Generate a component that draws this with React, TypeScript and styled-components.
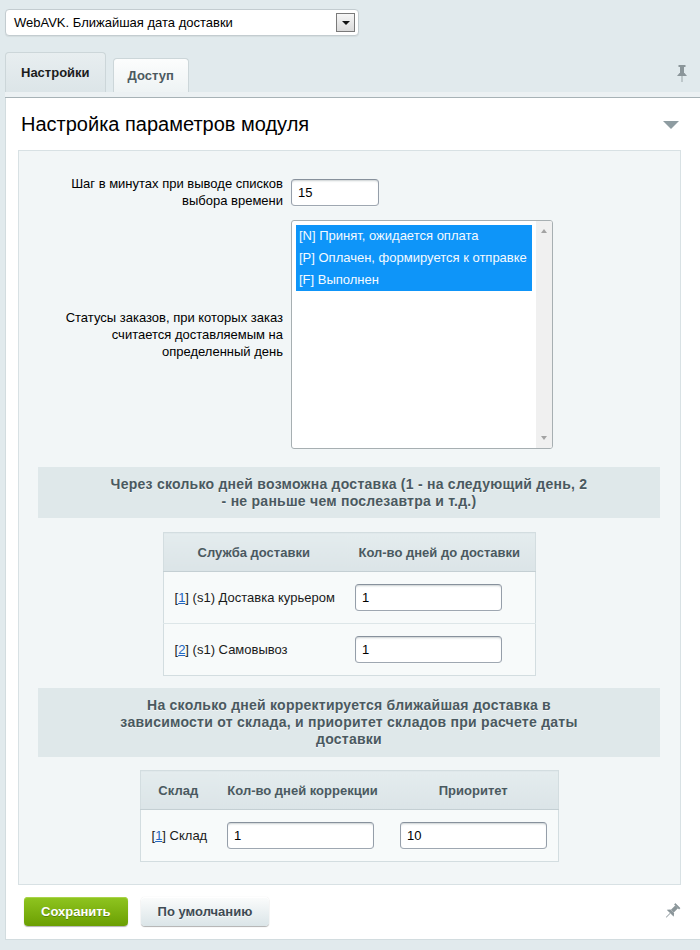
import React from "react";
import styled, { createGlobalStyle, css } from "styled-components";

const GlobalStyle = createGlobalStyle`
  html, body { margin: 0; padding: 0; }
  body {
    background: #e1eaed;
    font-family: "Liberation Sans", Arial, sans-serif;
    font-size: 13px;
    color: #000;
    overflow: hidden;
  }
  * { box-sizing: border-box; }
`;

const Page = styled.div`
  padding: 9px 0 0 5px;
  height: 950px;
`;

const ModuleSelect = styled.div`
  width: 354px;
  height: 27px;
  background: #fff;
  border: 1px solid #c3ccd0;
  border-radius: 4px;
  display: flex;
  align-items: center;
  justify-content: space-between;
  padding: 0 3px 0 8px;
  font-size: 13px;
  color: #000;
  box-shadow: 0 1px 1px rgba(0, 0, 0, 0.06);
`;

const DropButton = styled.span`
  width: 19px;
  height: 19px;
  border: 1px solid #7a7a7a;
  background: linear-gradient(#f6f6f6, #dadada);
  display: flex;
  align-items: center;
  justify-content: center;
  &::after {
    content: "";
    border-left: 4px solid transparent;
    border-right: 4px solid transparent;
    border-top: 4px solid #111;
    margin-top: 1px;
  }
`;

const TabBar = styled.div`
  margin-top: 16px;
  display: flex;
  align-items: flex-end;
  gap: 7px;
  height: 40px;
  padding-right: 13px;
`;

const Tab = styled.div<{ $active?: boolean }>`
  height: ${(p) => (p.$active ? 40 : 34)}px;
  padding: 0 ${(p) => (p.$active ? 15 : 14)}px;
  border: 1px solid #ccd6d9;
  border-bottom: none;
  border-radius: 4px 4px 0 0;
  display: flex;
  align-items: center;
  font-weight: bold;
  font-size: 13px;
  color: ${(p) => (p.$active ? "#1c1c1c" : "#4c5a60")};
  background: ${(p) =>
    p.$active
      ? "linear-gradient(#e8eef0, #dce5e8)"
      : "linear-gradient(#fcfdfd, #eef3f4)"};
`;

const PinSlot = styled.div`
  margin-left: auto;
  align-self: center;
  display: flex;
  margin-top: 2px;
`;

const TabStrip = styled.div`
  height: 6px;
  background: #ecf1f3;
  border-bottom: 1px solid #a7b2b6;
`;

const Panel = styled.div`
  background: #fff;
  border-left: 1px solid #d2dcdf;
  border-bottom: 1px solid #d2dcdf;
  padding: 0 19px 13px 12px;
`;

const TitleRow = styled.div`
  height: 52px;
  display: flex;
  align-items: center;
  justify-content: space-between;
  padding-left: 3px;
  padding-right: 2px;
`;

const Title = styled.h1`
  margin: 0;
  font-weight: normal;
  font-size: 20px;
  color: #000;
  line-height: 24px;
`;

const Collapse = styled.span`
  width: 0;
  height: 0;
  border-left: 8px solid transparent;
  border-right: 8px solid transparent;
  border-top: 8px solid #8e9ca1;
  margin-top: 1px;
`;

const Inner = styled.div`
  background: #f2f6f7;
  border: 1px solid #d8e1e4;
  padding: 24px 20px 22px 19px;
`;

const FieldRow = styled.div<{ $mt?: number }>`
  display: grid;
  grid-template-columns: 240px 1fr;
  column-gap: 8px;
  align-items: center;
  padding-left: 5px;
  margin-top: ${(p) => p.$mt ?? 0}px;
`;

const Label = styled.div`
  text-align: right;
  line-height: 17px;
  font-size: 13px;
  color: #000;
`;

const Control = styled.div`
  display: flex;
  align-items: center;
`;

const TextInput = styled.input<{ $w: number }>`
  display: block;
  width: ${(p) => p.$w}px;
  height: 27px;
  background: #fff;
  border: 1px solid;
  border-color: #87919c #959ea9 #9ea7b1 #959ea9;
  border-radius: 4px;
  box-shadow: 0 1px 0 0 rgba(255, 255, 255, 0.3),
    inset 0 2px 2px -1px rgba(180, 188, 191, 0.7);
  padding: 0 6px;
  font: 13px "Liberation Sans", Arial, sans-serif;
  color: #000;
  outline: none;
`;

const ListBox = styled.div`
  width: 262px;
  height: 229px;
  border: 1px solid #a7afb2;
  border-radius: 3px;
  background: #fff;
  display: flex;
  overflow: hidden;
`;

const Options = styled.div`
  flex: 1;
  padding: 4px;
`;

const Option = styled.div<{ $selected?: boolean }>`
  height: 22px;
  line-height: 22px;
  padding-left: 3px;
  font-size: 13px;
  white-space: nowrap;
  ${(p) =>
    p.$selected
      ? css`
          background: #0e95f9;
          color: #f4faff;
        `
      : css`
          color: #000;
        `}
`;

const ScrollTrack = styled.div`
  width: 16px;
  background: #f0f0f0;
  display: flex;
  flex-direction: column;
  justify-content: space-between;
  align-items: center;
  padding: 8px 0;
`;

const ScrollArrow = styled.span<{ $down?: boolean }>`
  width: 0;
  height: 0;
  border-left: 3.5px solid transparent;
  border-right: 3.5px solid transparent;
  ${(p) =>
    p.$down
      ? css`
          border-top: 4px solid #a3a3a3;
        `
      : css`
          border-bottom: 4px solid #a3a3a3;
        `}
`;

const Heading = styled.div<{ $mt: number; $pb: number }>`
  margin-top: ${(p) => p.$mt}px;
  background: #dfe8ea;
  padding: 9px 70px ${(p) => p.$pb}px;
  text-align: center;
  font-weight: bold;
  font-size: 14px;
  letter-spacing: 0.25px;
  line-height: 17px;
  color: #4a5960;
  text-shadow: 0 1px 0 rgba(255, 255, 255, 0.6);
`;

const Table = styled.table<{ $mt: number; $w: number }>`
  margin: ${(p) => p.$mt}px auto 0;
  width: ${(p) => p.$w}px;
  border-collapse: collapse;
  table-layout: fixed;
  border: 1px solid #d3dde0;
`;

const Th = styled.th`
  height: 39px;
  padding: 0 11px;
  background: linear-gradient(#e4ecee, #dbe4e7);
  border-bottom: 1px solid #c4cfd3;
  font-weight: bold;
  font-size: 13px;
  color: #4a5960;
  text-align: center;
  white-space: nowrap;
`;

const Td = styled.td<{ $h: number }>`
  height: ${(p) => p.$h}px;
  padding: 0 11px;
  background: #f7fafa;
  border-top: 1px solid #dde6e8;
  font-size: 13px;
  color: #1a1a1a;
  white-space: nowrap;
  vertical-align: middle;
`;

const IdLink = styled.a`
  color: #2266c0;
  text-decoration: underline;
`;

const Footer = styled.div`
  margin-top: 12px;
  display: flex;
  align-items: center;
  gap: 13px;
  padding-left: 6px;
  padding-right: 4px;
`;

const Button = styled.button<{ $primary?: boolean }>`
  height: 29px;
  padding: 0 17px;
  border: none;
  border-radius: 4px;
  font: bold 13px "Liberation Sans", Arial, sans-serif;
  cursor: pointer;
  ${(p) =>
    p.$primary
      ? css`
          color: #fff;
          background: linear-gradient(#8fc520, #6b9f02);
          box-shadow: 0 1px 1px rgba(0, 0, 0, 0.3), inset 0 1px 0 #a9d449;
          text-shadow: 0 1px 0 rgba(0, 0, 0, 0.25);
        `
      : css`
          color: #3f4b54;
          background: linear-gradient(#fbfcfc, #dbe5e8);
          box-shadow: 0 0 1px rgba(0, 0, 0, 0.15), 0 1px 1px rgba(0, 0, 0, 0.3),
            inset 0 1px 0 #fff;
          text-shadow: 0 1px 0 rgba(255, 255, 255, 0.7);
        `}
`;

const FooterPin = styled.div`
  margin-left: auto;
  display: flex;
`;

const Pin = ({ tilt }: { tilt?: boolean }) => (
  <svg
    width="10"
    height="17"
    viewBox="0 0 10 17"
    style={tilt ? { transform: "rotate(45deg)" } : undefined}
  >
    <rect x="1.5" y="0" width="7" height="2" fill="#8b969a" />
    <rect x="3" y="2" width="4" height="6" fill="#8b969a" />
    <polygon points="0,11 10,11 7.5,8 2.5,8" fill="#8b969a" />
    <rect x="4.5" y="11" width="1" height="6" fill="#9aa4a8" />
  </svg>
);

const statuses = [
  "[N] Принят, ожидается оплата",
  "[P] Оплачен, формируется к отправке",
  "[F] Выполнен",
];

const deliveries = [
  { id: "1", name: "(s1) Доставка курьером", days: "1" },
  { id: "2", name: "(s1) Самовывоз", days: "1" },
];

export default function App() {
  return (
    <>
      <GlobalStyle />
      <Page>
        <ModuleSelect>
          <span>WebAVK. Ближайшая дата доставки</span>
          <DropButton />
        </ModuleSelect>

        <TabBar>
          <Tab $active>Настройки</Tab>
          <Tab>Доступ</Tab>
          <PinSlot>
            <Pin />
          </PinSlot>
        </TabBar>
        <TabStrip />

        <Panel>
          <TitleRow>
            <Title>Настройка параметров модуля</Title>
            <Collapse />
          </TitleRow>

          <Inner>
            <FieldRow>
              <Label>Шаг в минутах при выводе списков выбора времени</Label>
              <Control>
                <TextInput $w={88} defaultValue="15" />
              </Control>
            </FieldRow>

            <FieldRow $mt={11}>
              <Label>
                Статусы заказов, при которых заказ считается доставляемым на
                определенный день
              </Label>
              <ListBox>
                <Options>
                  {statuses.map((s) => (
                    <Option key={s} $selected>
                      {s}
                    </Option>
                  ))}
                </Options>
                <ScrollTrack>
                  <ScrollArrow />
                  <ScrollArrow $down />
                </ScrollTrack>
              </ListBox>
            </FieldRow>

            <Heading $mt={18} $pb={8}>
              Через сколько дней возможна доставка (1 - на следующий день, 2 -
              не раньше чем послезавтра и т.д.)
            </Heading>

            <Table $mt={14} $w={372}>
              <colgroup>
                <col style={{ width: 181 }} />
                <col style={{ width: 191 }} />
              </colgroup>
              <thead>
                <tr>
                  <Th>Служба доставки</Th>
                  <Th>Кол-во дней до доставки</Th>
                </tr>
              </thead>
              <tbody>
                {deliveries.map((d) => (
                  <tr key={d.id}>
                    <Td $h={52}>
                      [<IdLink href="#">{d.id}</IdLink>] {d.name}
                    </Td>
                    <Td $h={52}>
                      <TextInput $w={147} defaultValue={d.days} />
                    </Td>
                  </tr>
                ))}
              </tbody>
            </Table>

            <Heading $mt={12} $pb={9}>
              На сколько дней корректируется ближайшая доставка в зависимости от
              склада, и приоритет складов при расчете даты доставки
            </Heading>

            <Table $mt={13} $w={418}>
              <colgroup>
                <col style={{ width: 76 }} />
                <col style={{ width: 173 }} />
                <col style={{ width: 169 }} />
              </colgroup>
              <thead>
                <tr>
                  <Th>Склад</Th>
                  <Th>Кол-во дней коррекции</Th>
                  <Th>Приоритет</Th>
                </tr>
              </thead>
              <tbody>
                <tr>
                  <Td $h={52}>
                    [<IdLink href="#">1</IdLink>] Склад
                  </Td>
                  <Td $h={52}>
                    <TextInput $w={147} defaultValue="1" />
                  </Td>
                  <Td $h={52}>
                    <TextInput $w={147} defaultValue="10" />
                  </Td>
                </tr>
              </tbody>
            </Table>
          </Inner>

          <Footer>
            <Button $primary>Сохранить</Button>
            <Button>По умолчанию</Button>
            <FooterPin>
              <Pin tilt />
            </FooterPin>
          </Footer>
        </Panel>
      </Page>
    </>
  );
}
